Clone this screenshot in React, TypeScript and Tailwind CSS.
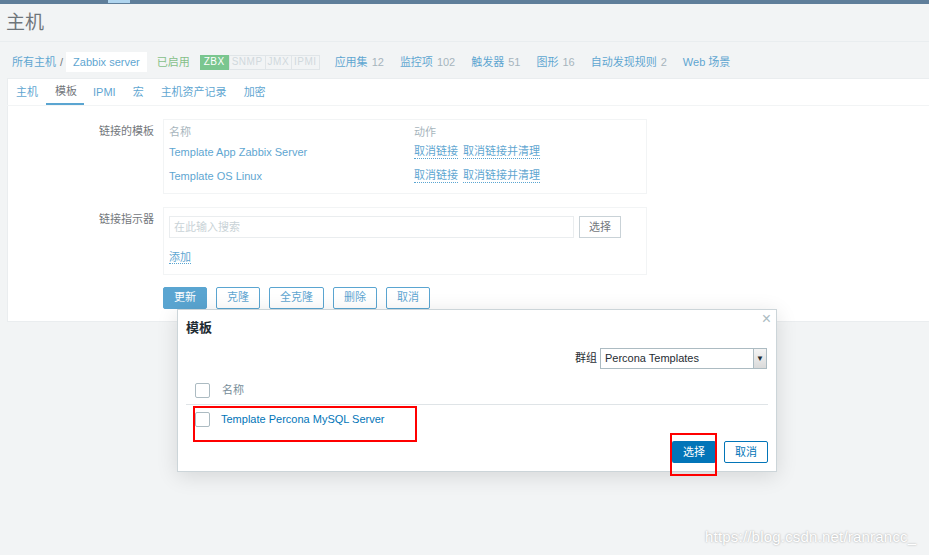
import React from 'react';

const font = "font-['Liberation_Sans','Noto_Sans_CJK_SC',sans-serif]";

const tabs = ['主机', '模板', 'IPMI', '宏', '主机资产记录', '加密'];

const navItems: { label: string; count?: string }[] = [
  { label: '应用集', count: '12' },
  { label: '监控项', count: '102' },
  { label: '触发器', count: '51' },
  { label: '图形', count: '16' },
  { label: '自动发现规则', count: '2' },
  { label: 'Web 场景' },
];

const linked = ['Template App Zabbix Server', 'Template OS Linux'];

const Checkbox = () => (
  <span className="block w-[15px] h-[15px] border border-[#acbbc2] rounded-[2px] bg-white" />
);

const App: React.FC = () => {
  return (
    <div className={`${font} relative w-[929px] h-[555px] overflow-hidden bg-[#ebeef0] text-[11px] text-[#1f2c33]`}>
      {/* top bar */}
      <div className="h-[4px] bg-[#0a3a64]">
        <div className="ml-[108px] w-[22px] h-[3px] bg-[#86bfe7]" />
      </div>

      {/* page title */}
      <div className="h-[38px] flex items-center pl-[6px] border-b border-[#dde3e6]">
        <h1 className="text-[19px] leading-none">主机</h1>
      </div>

      {/* host navigation */}
      <div className="flex items-center h-[20px] mt-[10px] mb-[6px] pl-[12px]">
        <span className="text-[#0275b8]">所有主机</span>
        <span className="ml-[4px] mr-[3px] text-[#1f2c33]">/</span>
        <span className="h-[20px] flex items-center px-[7px] bg-white text-[#0275b8] text-[11px]">Zabbix server</span>
        <span className="ml-[10px] text-[#429e47]">已启用</span>
        <div className="flex ml-[10px] text-[10px] leading-none tracking-[0.5px]">
          <span className="h-[15px] px-[3px] flex items-center bg-[#34a853] border border-[#34a853] text-white">ZBX</span>
          <span className="h-[15px] px-[2px] flex items-center border border-[#cfd8dc] text-[#b8c5cb]">SNMP</span>
          <span className="h-[15px] px-[2px] flex items-center border border-l-0 border-[#cfd8dc] text-[#b8c5cb]">JMX</span>
          <span className="h-[15px] px-[2px] flex items-center border border-l-0 border-[#cfd8dc] text-[#b8c5cb]">IPMI</span>
        </div>
        <div className="flex ml-[7px]">
          {navItems.map((n) => (
            <span key={n.label} className="px-[8px] text-[#0275b8]">
              {n.label}
              {n.count && <span className="ml-[4px] text-[#768d99]">{n.count}</span>}
            </span>
          ))}
        </div>
      </div>

      {/* main panel */}
      <div className="ml-[7px] bg-white border border-r-0 border-[#dfe4e7]">
        <div className="flex h-[27px] -ml-[1px] border-b border-[#ebeef0]">
          {tabs.map((t) => (
            <span
              key={t}
              className={
                t === '模板'
                  ? 'flex items-center pl-[9px] pr-[7px] border-b-2 border-[#0275b8] text-[#1f2c33]'
                  : 'flex items-center pl-[9px] pr-[8px] text-[#0275b8]'
              }
            >
              {t}
            </span>
          ))}
        </div>

        <div className="pt-[13px] pb-[12px]">
          {/* linked templates */}
          <div className="flex">
            <div className="w-[155px] text-right pr-[9px] pt-[4px]">链接的模板</div>
            <div className="w-[484px] border border-[#ebeef0] px-[5px] pt-[4px] pb-[5px]">
              <div className="flex h-[16px] items-center text-[#768d99]">
                <span className="w-[245px]">名称</span>
                <span>动作</span>
              </div>
              {linked.map((l) => (
                <div key={l} className="flex h-[24px] items-center">
                  <span className="w-[245px] text-[#0275b8]">{l}</span>
                  <span className="text-[#0275b8] border-b border-dotted border-[#0275b8] leading-[13px]">取消链接</span>
                  <span className="ml-[5px] text-[#0275b8] border-b border-dotted border-[#0275b8] leading-[13px]">取消链接并清理</span>
                </div>
              ))}
            </div>
          </div>

          {/* link new templates */}
          <div className="flex mt-[13px]">
            <div className="w-[155px] text-right pr-[9px] pt-[4px]">链接指示器</div>
            <div className="w-[484px] border border-[#ebeef0] px-[5px] pt-[8px] pb-[8px]">
              <div className="flex">
                <div className="w-[405px] h-[22px] border border-[#dfe4e7] flex items-center pl-[4px] text-[#acbbc2]">在此输入搜索</div>
                <div className="ml-[5px] w-[42px] h-[22px] border border-[#acbbc2] flex items-center justify-center">选择</div>
              </div>
              <div className="mt-[11px]">
                <span className="text-[#0275b8] border-b border-dotted border-[#0275b8] leading-[13px]">添加</span>
              </div>
            </div>
          </div>

          {/* form buttons */}
          <div className="flex gap-[9px] mt-[12px] ml-[155px]">
            <button className="h-[22px] px-[10px] bg-[#0275b8] border border-[#0275b8] text-white rounded-[2px]">更新</button>
            <button className="h-[22px] px-[10px] bg-white border border-[#0275b8] text-[#0275b8] rounded-[2px]">克隆</button>
            <button className="h-[22px] px-[10px] bg-white border border-[#0275b8] text-[#0275b8] rounded-[2px]">全克隆</button>
            <button className="h-[22px] px-[10px] bg-white border border-[#0275b8] text-[#0275b8] rounded-[2px]">删除</button>
            <button className="h-[22px] px-[10px] bg-white border border-[#0275b8] text-[#0275b8] rounded-[2px]">取消</button>
          </div>
        </div>
      </div>

      {/* overlay background */}
      <div className="absolute inset-0 bg-[rgba(255,255,255,0.35)]" />

      {/* dialogue */}
      <div className="absolute left-[177px] top-[309px] w-[600px] h-[163px] bg-white border border-[#ccd5d9] shadow-[0_4px_20px_rgba(0,0,0,0.12)]">
        <span className="absolute right-[5px] top-[1px] text-[16px] leading-none text-[#acbbc2]">×</span>
        <div className="pl-[8px] pt-[10px] text-[13px] font-bold leading-[16px]">模板</div>
        <div className="flex justify-end items-center pr-[9px] mt-[12px]">
          <span className="mr-[3px]">群组</span>
          <div className="flex w-[167px] h-[21px] border border-[#acbbc2]">
            <span className="flex-1 flex items-center pl-[4px]">Percona Templates</span>
            <span className="w-[13px] flex items-center justify-center bg-gradient-to-b from-[#f4f4f4] to-[#dadada] border-l border-[#acbbc2] text-[8px]">▼</span>
          </div>
        </div>
        <div className="mx-[8px] mt-[8px]">
          <div className="flex items-center h-[28px] border-b border-[#dfe4e7] pl-[9px]">
            <Checkbox />
            <span className="ml-[12px] text-[#768d99]">名称</span>
          </div>
          <div className="flex items-center h-[28px] pl-[9px]">
            <Checkbox />
            <span className="ml-[11px] text-[#0275b8]">Template Percona MySQL Server</span>
          </div>
          <div className="flex justify-end gap-[8px] mt-[8px]">
            <button className="h-[22px] w-[44px] bg-[#0275b8] text-white rounded-[2px]">选择</button>
            <button className="h-[22px] w-[44px] bg-white border border-[#0275b8] text-[#0275b8] rounded-[2px]">取消</button>
          </div>
        </div>
      </div>

      {/* annotation boxes */}
      <div className="absolute left-[193px] top-[406px] w-[224px] h-[36px] border-2 border-[#ff0000]" />
      <div className="absolute left-[670px] top-[433px] w-[47px] h-[43px] border-2 border-[#ff0000]" />

      {/* watermark */}
      <div className="absolute left-[705px] top-[526px] text-[15px] tracking-[0.2px] text-white [text-shadow:0_0_2px_#9a9a9a]">
        https://blog.csdn.net/ranrancc_
      </div>
    </div>
  );
};

export default App;
